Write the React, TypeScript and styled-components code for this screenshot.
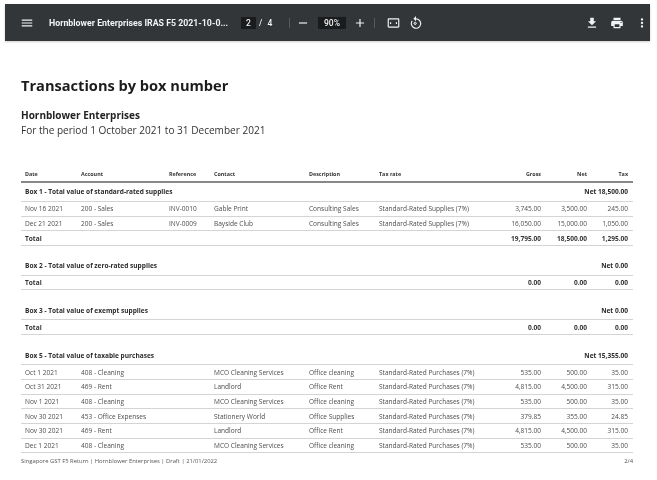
import React from "react";
import styled, { createGlobalStyle } from "styled-components";

const Global = createGlobalStyle`
  html, body { margin: 0; padding: 0; background: #fff; }
  body { width: 657px; height: 480px; overflow: hidden; font-family: "Open Sans", "Noto Sans", sans-serif; }
`;
const Screen = styled.div`
  width: 657px; height: 480px; overflow: hidden; background: #fff;
  display: flex; flex-direction: column; filter: blur(0.55px);
`;
const Toolbar = styled.header`
  flex: none; height: 37px; margin: 4px 7px 0 5px; background: #323639;
  display: flex; align-items: center; padding-left: 15px; color: #f1f3f4;
  box-shadow: 0 1px 2px rgba(0,0,0,.2);
  font-family: Roboto, sans-serif;
`;
const IconBtn = styled.span<{ $w?: number; $ml?: number }>`
  flex: none; width: ${p => p.$w ?? 14}px; height: 14px; margin-left: ${p => p.$ml ?? 0}px;
  display: flex; align-items: center; justify-content: center;
  svg { display: block; width: 100%; height: 100%; fill: currentColor; }
`;
const DocTitle = styled.span`
  margin-left: 15px; width: 180px; flex: none; font-size: 8.75px; font-weight: 700; white-space: nowrap; letter-spacing: 0.02px;
`;
const PageBox = styled.span<{ $w: number; $ml: number }>`
  flex: none; width: ${p => p.$w}px; height: 12px; margin-left: ${p => p.$ml}px; background: #191b1c;
  display: flex; align-items: center; justify-content: center; font-size: 8.5px; font-weight: 500;
`;
const PageTotal = styled.span`
  flex: none; margin-left: 3px; width: 23px; font-size: 8.5px; font-weight: 500; word-spacing: 3px; white-space: nowrap;
`;
const Divider = styled.span<{ $ml: number }>`
  flex: none; width: 1px; height: 10px; margin-left: ${p => p.$ml}px; background: #55595c;
`;
const Report = styled.main`
  flex: 1; padding: 35px 24px 0 21px; color: #222; display: flex; flex-direction: column;
`;
const Title = styled.h1`
  margin: 0; font-size: 14.6px; line-height: 18px; font-weight: 700; color: #1c1c1c;
`;
const Company = styled.h2`
  margin: 14px 0 0; font-size: 10px; line-height: 15px; font-weight: 700; color: #222;
`;
const Period = styled.p`
  margin: 0; font-size: 10.05px; line-height: 15px; color: #333;
`;
const Table = styled.table`
  margin-top: 28.500px; width: 612px; table-layout: fixed; border-collapse: collapse;
  font-size: 6.55px; color: #4d4d4d;
`;
const Th = styled.th<{ $right?: boolean }>`
  height: 14px; padding: 0 4px; font-size: 5.4px; font-weight: 700; color: #333;
  text-align: ${p => (p.$right ? "right" : "left")}; border-bottom: 2px solid #888; white-space: nowrap;
  &:last-child { padding-right: 5px; }
`;
const Td = styled.td<{ $right?: boolean; $bold?: boolean }>`
  height: 13.7px; padding: 0 4px; white-space: nowrap; overflow: visible;
  text-align: ${p => (p.$right ? "right" : "left")};
  font-weight: ${p => (p.$bold ? 700 : 400)}; color: ${p => (p.$bold ? "#333" : "#4d4d4d")};
  border-bottom: 1px solid #d4d4d4;
  &:last-child { padding-right: 5px; }
`;
const BoxTd = styled.td<{ $right?: boolean }>`
  height: 18.4px; padding: 0 4px; font-weight: 700; color: #2b2b2b; font-size: 6.55px;
  text-align: ${p => (p.$right ? "right" : "left")}; white-space: nowrap;
  border-bottom: 1px solid #d4d4d4;
  &:last-child { padding-right: 5px; }
`;
const Spacer = styled.td<{ $h?: number }>`height: ${p => p.$h ?? 10.4}px; padding: 0;`;
const Footer = styled.footer`
  width: 612px; margin-top: 4px; display: flex; justify-content: space-between;
  font-size: 5.85px; color: #555;
`;

const widths = [56, 88, 45, 95, 70, 124, 46, 46, 42];
const head = ["Date", "Account", "Reference", "Contact", "Description", "Tax rate", "Gross", "Net", "Tax"];
const STD = "Standard-Rated Supplies (7%)";
const PUR = "Standard-Rated Purchases (7%)";
type Sec = { title: string; net: string; rows: string[][]; total: string[] };
const sections: Sec[] = [
  { title: "Box 1 - Total value of standard-rated supplies", net: "Net 18,500.00", rows: [
    ["Nov 16 2021", "200 - Sales", "INV-0010", "Gable Print", "Consulting Sales", STD, "3,745.00", "3,500.00", "245.00"],
    ["Dec 21 2021", "200 - Sales", "INV-0009", "Bayside Club", "Consulting Sales", STD, "16,050.00", "15,000.00", "1,050.00"],
  ], total: ["19,795.00", "18,500.00", "1,295.00"] },
  { title: "Box 2 - Total value of zero-rated supplies", net: "Net 0.00", rows: [], total: ["0.00", "0.00", "0.00"] },
  { title: "Box 3 - Total value of exempt supplies", net: "Net 0.00", rows: [], total: ["0.00", "0.00", "0.00"] },
];
const purchases: string[][] = [
  ["Oct 1 2021", "408 - Cleaning", "", "MCO Cleaning Services", "Office cleaning", PUR, "535.00", "500.00", "35.00"],
  ["Oct 31 2021", "469 - Rent", "", "Landlord", "Office Rent", PUR, "4,815.00", "4,500.00", "315.00"],
  ["Nov 1 2021", "408 - Cleaning", "", "MCO Cleaning Services", "Office cleaning", PUR, "535.00", "500.00", "35.00"],
  ["Nov 30 2021", "453 - Office Expenses", "", "Stationery World", "Office Supplies", PUR, "379.85", "355.00", "24.85"],
  ["Nov 30 2021", "469 - Rent", "", "Landlord", "Office Rent", PUR, "4,815.00", "4,500.00", "315.00"],
  ["Dec 1 2021", "408 - Cleaning", "", "MCO Cleaning Services", "Office cleaning", PUR, "535.00", "500.00", "35.00"],
];

const BoxRow = ({ title, net }: { title: string; net: string }) => (
  <tr>
    <BoxTd colSpan={6}>{title}</BoxTd>
    <BoxTd colSpan={3} $right>{net}</BoxTd>
  </tr>
);
const DataRow = ({ cells }: { cells: string[] }) => (
  <tr>{cells.map((c, i) => <Td key={i} $right={i >= 6}>{c}</Td>)}</tr>
);
const Icon = ({ d, w, ml }: { d: string; w?: number; ml?: number }) => (
  <IconBtn $w={w} $ml={ml}><svg viewBox="0 0 24 24"><path d={d} /></svg></IconBtn>
);

export default function App() {
  return (
    <Screen>
      <Global />
      <Toolbar>
        <Icon d="M3 18h18v-2H3v2zm0-5h18v-2H3v2zm0-7v2h18V6H3z" />
        <DocTitle>Hornblower Enterprises IRAS F5 2021-10-0...</DocTitle>
        <PageBox $w={15} $ml={12}>2</PageBox>
        <PageTotal>/ 4</PageTotal>
        <Divider $ml={7} />
        <Icon d="M5 11h14v2H5z" ml={6} />
        <PageBox $w={28} $ml={8}>90%</PageBox>
        <Icon d="M19 13h-6v6h-2v-6H5v-2h6V5h2v6h6v2z" ml={7} />
        <Divider $ml={7} />
        <IconBtn $w={15} $ml={11}>
          <svg viewBox="0 0 24 24"><path d="M20 4H4c-1.100 0-2 .9-2 2v12c0 1.100.9 2 2 2h16c1.100 0 2-.9 2-2V6c0-1.100-.9-2-2-2zm0 14H4V6h16v12zM6 10.500h2v3H6zm10 0h2v3h-2z" /></svg>
        </IconBtn>
        <IconBtn $ml={8}>
          <svg viewBox="0 0 24 24"><path d="M12 4V0L7.500 4.500 12 9V6a7 7 0 1 1-5.800 3.100L4.600 7.900A9 9 0 1 0 12 4zM10.500 9.300l-3.200 3.200 3.200 3.200 3.200-3.200zm0 1.900 1.300 1.300-1.300 1.300-1.300-1.300z" /></svg>
        </IconBtn>
        <Icon d="M19 9h-4V3H9v6H5l7 7 7-7zM5 18v2h14v-2H5z" ml={162} />
        <Icon d="M19 8H5c-1.660 0-3 1.340-3 3v6h4v4h12v-4h4v-6c0-1.660-1.340-3-3-3zm-3 11H8v-5h8v5zm3-7c-.55 0-1-.45-1-1s.45-1 1-1 1 .45 1 1-.45 1-1 1zm-1-9H6v4h12V3z" ml={11} />
        <Icon d="M12 8c1.100 0 2-.9 2-2s-.9-2-2-2-2 .9-2 2 .9 2 2 2zm0 2c-1.100 0-2 .9-2 2s.9 2 2 2 2-.9 2-2-.9-2-2-2zm0 6c-1.100 0-2 .9-2 2s.9 2 2 2 2-.9 2-2-.9-2-2-2z" ml={11} />
      </Toolbar>
      <Report>
        <Title>Transactions by box number</Title>
        <Company>Hornblower Enterprises</Company>
        <Period>For the period 1 October 2021 to 31 December 2021</Period>
        <Table>
          <colgroup>{widths.map((w, i) => <col key={i} style={{ width: w }} />)}</colgroup>
          <thead>
            <tr>{head.map((h, i) => <Th key={h} $right={i >= 6}>{h}</Th>)}</tr>
          </thead>
          <tbody>
            {sections.map((s, n) => (
              <React.Fragment key={s.title}>
                {n > 0 && <tr><Spacer colSpan={9} /></tr>}
                <BoxRow title={s.title} net={s.net} />
                {s.rows.map((r, i) => <DataRow key={i} cells={r} />)}
                <tr>
                  <Td colSpan={6} $bold>Total</Td>
                  {s.total.map((t, i) => <Td key={i} $right $bold>{t}</Td>)}
                </tr>
              </React.Fragment>
            ))}
            <tr><Spacer colSpan={9} $h={11} /></tr>
            <BoxRow title="Box 5 - Total value of taxable purchases" net="Net 15,355.00" />
            {purchases.map((r, i) => <DataRow key={i} cells={r} />)}
          </tbody>
        </Table>
        <Footer>
          <span>Singapore GST F5 Return | Hornblower Enterprises | Draft | 21/01/2022</span>
          <span>2/4</span>
        </Footer>
      </Report>
    </Screen>
  );
}
